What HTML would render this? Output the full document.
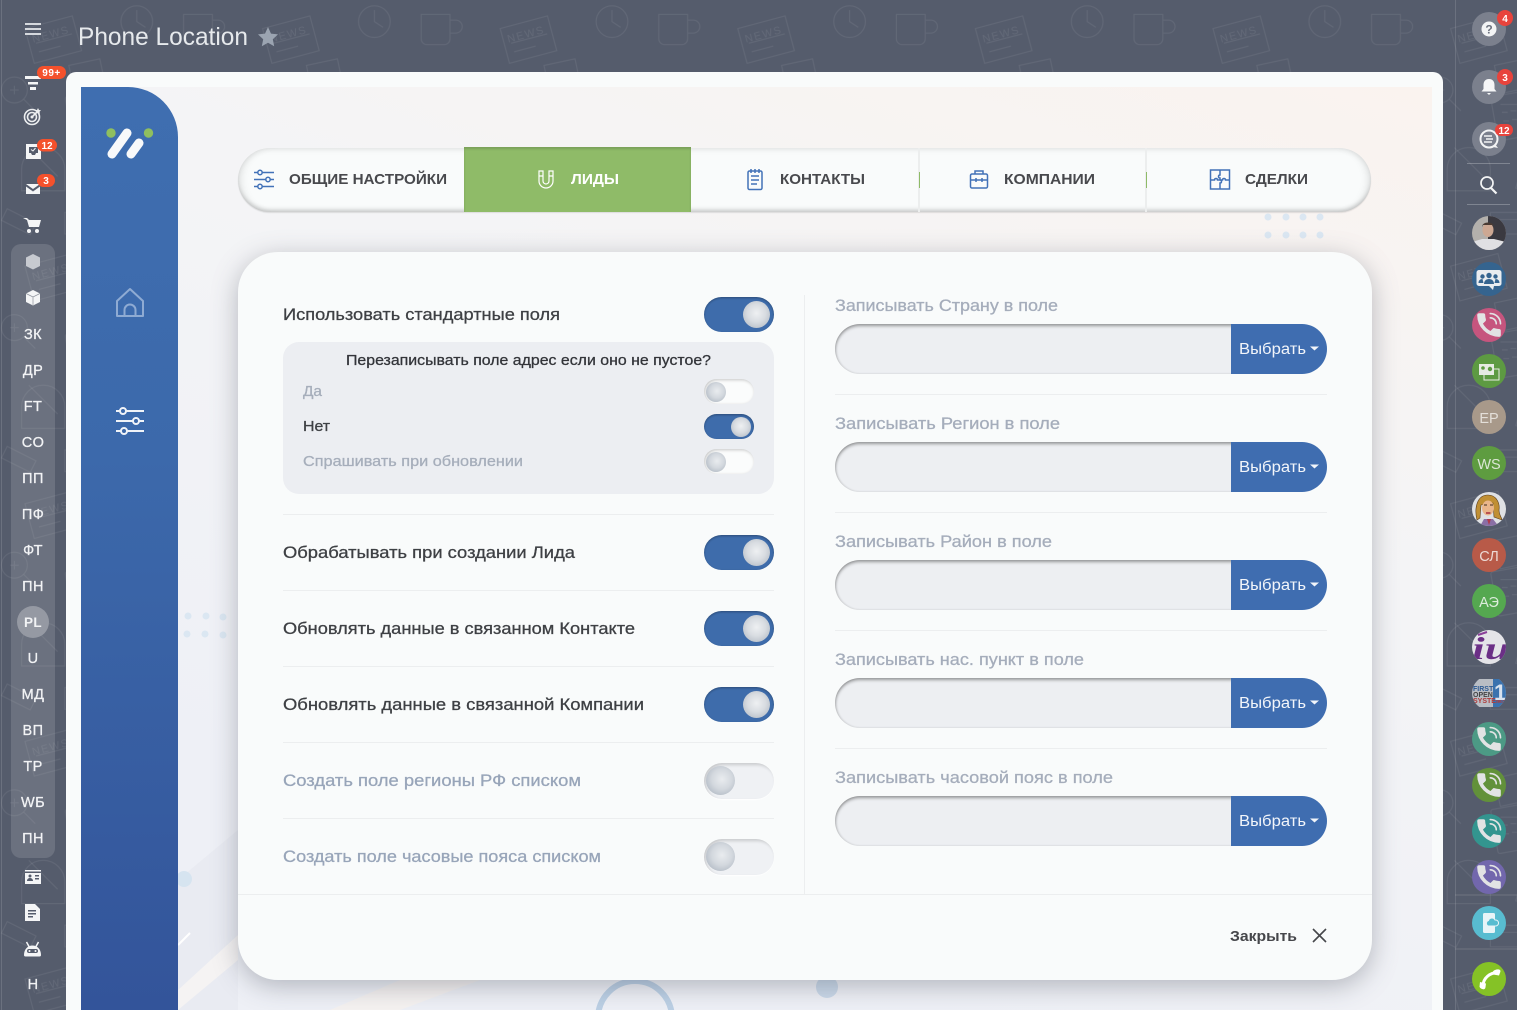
<!DOCTYPE html>
<html lang="ru"><head><meta charset="utf-8"><title>Phone Location</title>
<style>
html,body{margin:0;padding:0;width:1517px;height:1010px;overflow:hidden;background:#555c6c;font-family:"Liberation Sans","DejaVu Sans",sans-serif}
#root{position:relative;width:1517px;height:1010px;overflow:hidden}
.a{position:absolute}
svg{position:absolute;left:0;top:0}
.tog{position:absolute;width:70px;height:35px;border-radius:18px;background:#3e6cab;box-shadow:inset 0 1px 2px rgba(0,0,0,.3)}
.tog i{position:absolute;right:4px;top:4px;width:27px;height:27px;border-radius:50%;background:radial-gradient(circle at 50% 45%,#eef0f2 0,#d8dce1 45%,#a9b2bd 100%)}
.tog.s{width:50px;height:25px}
.tog.s i{width:20px;height:20px;top:2.500px;right:3px}
.tog.off{background:#eff1f4;box-shadow:inset 2px 2px 3px rgba(0,0,0,.16),0 1px 1px rgba(255,255,255,.8)}
.tog.off i{right:auto;left:2px;top:3px;width:29px;height:29px;background:radial-gradient(circle at 55% 45%,#e9ecef 0,#d3d8de 45%,#a2acb8 100%)}
.tog.s.off{background:#fbfcfc;box-shadow:inset 1px 1px 3px rgba(0,0,0,.22)}
.tog.s.off i{width:20px;height:20px;left:2px;top:2.500px}
.ln{position:absolute;height:1px;background:#eceeef}
.inp{position:absolute;left:835px;width:430px;height:50px;background:#edeff2;border-radius:25px 0 0 25px;box-shadow:inset 0 2px 3px rgba(0,0,0,.36),inset 1px 0 2px rgba(0,0,0,.1)}
.btn{position:absolute;left:1231px;width:96px;height:50px;background:#3f6db0;border-radius:0 25px 25px 0}
.w text{stroke-width:.28}
</style></head><body><div id="root">

<svg width="1517" height="1010" style="z-index:0">
<defs>
<pattern id="dd" width="330" height="330" patternUnits="userSpaceOnUse" patternTransform="scale(.72)">
<g fill="none" stroke="#fff" stroke-opacity=".07" stroke-width="1.600">
<rect x="40" y="30" width="68" height="50" transform="rotate(-15 74 55)"/>
<path d="M50 60l50-13M54 72l30-8"/>
<circle cx="190" cy="30" r="22"/><path d="M190 14v16l12 8"/>
<rect x="98" y="86" width="44" height="40" transform="rotate(-12 120 100)"/>
<path d="M255 20h40v34a8 8 0 0 1-8 8h-24a8 8 0 0 1-8-8zM295 28h8a7 7 0 0 1 0 18h-8"/>
<circle cx="20" cy="125" r="18"/><path d="M33 138l16 16M14 125h12M20 119v12"/>
<rect x="95" y="130" width="50" height="62" rx="3" transform="rotate(-10 120 160)"/>
<path d="M104 145h28M106 156h8M118 154h8M130 152h6M108 168h8M120 166h8"/>
<path d="M190 120l60-10 8 44-60 10zM198 130l44-7M200 142l44-7"/>
<circle cx="285" cy="140" r="24"/><path d="M273 152l24-24M290 123l8 8"/>
<path d="M30 235a30 30 0 1 1 60 0v30H30z"/><path d="M40 205l40 40"/>
<rect x="130" y="225" width="70" height="46" transform="rotate(15 165 248)"/>
<path d="M150 240h40M146 252h34"/>
<circle cx="245" cy="240" r="20"/><path d="M245 226v28M231 240h28"/>
<path d="M275 220h45v40h-20l-10 12v-12h-15z"/>
<path d="M10 290l40 20-8 16-40-20zM90 295h50v30H90zM100 305h30M180 295l30 18-20 14"/>
</g>
<text x="46" y="52" font-size="15" fill="#fff" fill-opacity=".08" letter-spacing="2" transform="rotate(-15 74 55)">NEWS</text>
</pattern>
<symbol id="ph" viewBox="0 0 24 24"><path fill="#e2e3e4" stroke="#e2e3e4" stroke-width=".9" stroke-linejoin="round" d="M6.600 10.800c1.400 2.800 3.800 5.100 6.600 6.600l2.200-2.200c.3-.3.7-.4 1-.2 1.100.4 2.300.6 3.600.6.600 0 1 .4 1 1V20c0 .6-.4 1-1 1C10.600 21 3 13.400 3 4c0-.6.4-1 1-1h3.500c.6 0 1 .4 1 1 0 1.300.2 2.500.6 3.600.1.300 0 .7-.2 1z"/><path fill="none" stroke="#e2e3e4" stroke-width="1.300" stroke-linecap="round" d="M13 2.800a8.200 8.200 0 0 1 8.200 8.200M13 6.200a4.800 4.800 0 0 1 4.800 4.800"/></symbol>
</defs>
<rect width="1517" height="1010" fill="#555c6c"/>
<rect width="1517" height="1010" fill="url(#dd)"/>
<path d="M1.500 0V1010M1455.500 0V1010" stroke="#fff" stroke-opacity=".13"/>
<path d="M1455 895H1517M1455 949H1517" stroke="#fff" stroke-opacity=".15"/>
</svg>

<div class="a" style="left:11px;top:244px;width:44px;height:614px;border-radius:10px;background:rgba(255,255,255,.13)"></div>
<div class="a" style="left:66px;top:72px;width:1377px;height:938px;background:#f9fbfb;border-radius:10px 10px 0 0"></div>
<div class="a" style="left:81px;top:87px;width:1351px;height:923px;background:linear-gradient(200deg,rgba(250,243,239,1) 0%,rgba(247,246,246,.6) 35%,rgba(238,240,246,1) 80%),#f0f2f6"></div>
<div class="a" style="left:81px;top:87px;width:97px;height:923px;border-radius:0 50px 0 0;background:linear-gradient(180deg,#3f6eb0 0%,#3c69ab 40%,#33549a 100%)"></div>

<svg width="1517" height="1010" style="z-index:0">
<clipPath id="cb"><rect x="178" y="87" width="1254" height="923"/></clipPath>
<g clip-path="url(#cb)">
<polygon points="178,880 238,830 238,1010 178,1010" fill="#e9ebf2"/>
<polygon points="178,990 238,935 238,960 178,1010" fill="#f5f3f3"/>
<path d="M178 945l12-12" stroke="#fff" stroke-width="2"/>
<polygon points="330,1010 400,980 480,980 400,1010" fill="#f5f2f1"/>
<g fill="#dbe7f2"><circle cx="1268" cy="217" r="3.500"/><circle cx="1286" cy="217" r="3.500"/><circle cx="1303" cy="217" r="3.500"/><circle cx="1320" cy="217" r="3.500"/><circle cx="1268" cy="235" r="3.500"/><circle cx="1286" cy="235" r="3.500"/><circle cx="1303" cy="235" r="3.500"/><circle cx="1320" cy="235" r="3.500"/>
<circle cx="188" cy="616" r="3.500"/><circle cx="206" cy="616" r="3.500"/><circle cx="223" cy="617" r="3.500"/><circle cx="187" cy="634" r="3.500"/><circle cx="205" cy="634" r="3.500"/><circle cx="223" cy="635" r="3.500"/></g>
<circle cx="184" cy="879" r="8" fill="#d6e4f0"/>
<circle cx="827" cy="987" r="11" fill="#cbdaea"/>
<circle cx="635" cy="1018" r="37" fill="none" stroke="#bcd0e5" stroke-width="6"/>
</g>
</svg>

<!-- tabs -->
<div class="a" style="left:238px;top:148px;width:1133px;height:64px;border-radius:32px;background:#f9fbfb;box-shadow:inset 0 5px 6px -3px rgba(0,0,0,.07),inset 7px 0 8px -4px rgba(0,0,0,.1),inset -7px 0 8px -4px rgba(0,0,0,.1),inset 0 -4px 5px -2px rgba(0,0,0,.2),0 1px 1px rgba(0,0,0,.1)"></div>
<div class="a" style="left:464px;top:147px;width:227px;height:65px;background:#8fbb68;box-shadow:inset 0 2px 2px rgba(0,0,0,.15)"></div>
<div class="a" style="left:918px;top:148px;width:2px;height:64px;background:#eceeee"></div>
<div class="a" style="left:1145px;top:148px;width:2px;height:64px;background:#eceeee"></div>
<div class="a" style="left:919px;top:172px;width:1px;height:16px;background:#8fbb68"></div>
<div class="a" style="left:1146px;top:172px;width:1px;height:16px;background:#8fbb68"></div>

<!-- card -->
<div class="a" style="left:238px;top:252px;width:1134px;height:728px;border-radius:40px;background:#f9fbfb;box-shadow:0 6px 26px rgba(60,65,80,.34)"></div>
<div class="a" style="left:283px;top:342px;width:491px;height:152px;border-radius:16px;background:#eceef2"></div>
<div class="ln" style="left:283px;top:514px;width:491px"></div>
<div class="ln" style="left:283px;top:590px;width:491px"></div>
<div class="ln" style="left:283px;top:666px;width:491px"></div>
<div class="ln" style="left:283px;top:742px;width:491px"></div>
<div class="ln" style="left:283px;top:818px;width:491px"></div>
<div class="a" style="left:804px;top:295px;width:1px;height:599px;background:#eceeef"></div>
<div class="ln" style="left:238px;top:894px;width:1134px"></div>
<div class="ln" style="left:835px;top:394px;width:492px"></div>
<div class="ln" style="left:835px;top:512px;width:492px"></div>
<div class="ln" style="left:835px;top:630px;width:492px"></div>
<div class="ln" style="left:835px;top:748px;width:492px"></div>

<div class="tog" style="left:704px;top:297px"><i></i></div>
<div class="tog s off" style="left:704px;top:379px"><i></i></div>
<div class="tog s" style="left:704px;top:414px"><i></i></div>
<div class="tog s off" style="left:704px;top:449px"><i></i></div>
<div class="tog" style="left:704px;top:535px"><i></i></div>
<div class="tog" style="left:704px;top:611px"><i></i></div>
<div class="tog" style="left:704px;top:687px"><i></i></div>
<div class="tog off" style="left:704px;top:763px;height:36px"><i></i></div>
<div class="tog off" style="left:704px;top:839px;height:36px"><i></i></div>

<div class="inp" style="top:324px"></div><div class="btn" style="top:324px"></div>
<div class="inp" style="top:442px"></div><div class="btn" style="top:442px"></div>
<div class="inp" style="top:560px"></div><div class="btn" style="top:560px"></div>
<div class="inp" style="top:678px"></div><div class="btn" style="top:678px"></div>
<div class="inp" style="top:796px"></div><div class="btn" style="top:796px"></div>

<svg width="1517" height="1010" style="z-index:2" font-family="'Liberation Sans','DejaVu Sans',sans-serif">
<!-- header -->
<g stroke="#d5d8dd" stroke-width="2"><path d="M25 24h16M25 29h16M25 34h16"/></g>
<text x="78" y="45" font-size="25" fill="#e6e9ec" textLength="170" lengthAdjust="spacingAndGlyphs">Phone Location</text>
<path d="M268 27l3 6.600 7 .8-5.200 4.800 1.400 7-6.200-3.500-6.200 3.500 1.400-7-5.200-4.800 7-.8z" fill="#9ba4b1"/>

<!-- left icons -->
<g fill="#f4f5f6">
<path d="M25 76h16v3H25zM28 82h10v2.500H28zM30 87h6v3h-6z"/>
<path d="M26 144h15v15H26z"/><path d="M29 147h9v6h-2l-1 2h-3l-1-2h-2z" fill="#555c6c"/><path d="M31 149.500l2 1.500 2.500-3" stroke="#f4f5f6" fill="none"/>
<path d="M26 184h14l-7 5zM26 186.500l7 5 7-5v7.500H26z"/>
<path d="M23 218h4l2 2h12l-2 7H29l-2-7zM29 229a2 2 0 1 1 0 4 2 2 0 0 1 0-4zM37 229a2 2 0 1 1 0 4 2 2 0 0 1 0-4z"/>
<path d="M33 254l7 3.500v8.500l-7 3.500-7-3.500v-8.500z" fill="#c7cad0"/>
<path d="M33 290l7 3.500v8.500l-7 3.500-7-3.500v-8.500z"/><path d="M26 293.500l7 3.500 7-3.500M33 297v8" fill="none" stroke="#8d929c" stroke-width=".7"/>
<path d="M25 870h16v1.500H25z"/><path d="M25 873h16v11H25z"/>
<path d="M27 881c0-2 1.500-3 3-3s3 1 3 3zM35 875h4v1.500h-4zM35 878h4v1.500h-4z" fill="#555c6c"/><circle cx="30" cy="876" r="1.500" fill="#555c6c"/>
<path d="M25 904h10l5 5v12H25z"/><path d="M28 910h8v1.500h-8zM28 913h8v1.500h-8zM28 916h5v1.500h-5z" fill="#555c6c"/>
<path d="M24 955c0-6 4-9.500 8.500-9.500s8.500 3.500 8.500 9.500c0 1-.5 1.500-1.500 1.500h-14c-1 0-1.500-.5-1.500-1.500z"/><path d="M26.500 942l2.500 4.500M38.500 942l-2.500 4.500" stroke="#f4f5f6" stroke-width="1.500"/>
<rect x="27" y="949" width="11" height="4" rx="2" fill="#555c6c"/><circle cx="29.500" cy="951" r="1" fill="#f4f5f6"/><circle cx="35.500" cy="951" r="1" fill="#f4f5f6"/>
</g>
<g fill="none" stroke="#eceef0" stroke-width="1.600"><circle cx="32" cy="117" r="7.500"/><circle cx="32" cy="117" r="4.500"/><path d="M32 117l7-7"/></g>
<circle cx="32" cy="117" r="1.500" fill="#eceef0"/>
<path d="M38 108l1 2 2 .3-1.500 1.400.4 2-1.900-1-1.900 1 .4-2-1.500-1.400 2-.3z" fill="#eceef0"/>

<!-- badges -->
<rect x="37" y="66" width="29" height="13" rx="6.500" fill="#f4512c"/><text x="51.500" y="76" font-size="10" font-weight="bold" fill="#fff" text-anchor="middle" letter-spacing=".5">99+</text>
<rect x="37" y="139" width="20" height="12.500" rx="6.200" fill="#f4512c"/><text x="47" y="149" font-size="10" font-weight="bold" fill="#fff" text-anchor="middle">12</text>
<rect x="37" y="174" width="18" height="13" rx="6.500" fill="#f4512c"/><text x="46" y="184" font-size="10" font-weight="bold" fill="#fff" text-anchor="middle">3</text>

<!-- left labels -->
<circle cx="33" cy="622" r="16" fill="#9599a3"/>
<g class="w" font-size="14.500" fill="#f2f3f5" stroke="#f2f3f5" text-anchor="middle" letter-spacing=".4">
<text x="33" y="339">ЗК</text><text x="33" y="375">ДР</text><text x="33" y="411">FT</text><text x="33" y="447">CO</text><text x="33" y="483">ПП</text><text x="33" y="519">ПФ</text><text x="33" y="555">ФТ</text><text x="33" y="591">ПН</text><text x="33" y="627" font-weight="bold" font-size="13.500" stroke="none">PL</text><text x="33" y="663">U</text><text x="33" y="699">МД</text><text x="33" y="735">ВП</text><text x="33" y="771">ТР</text><text x="33" y="807">WБ</text><text x="33" y="843">ПН</text><text x="33" y="989">Н</text>
</g>

<!-- sidebar logo + icons -->
<circle cx="111" cy="133" r="4.700" fill="#8fbf5f"/><circle cx="148.500" cy="133" r="4.700" fill="#8fbf5f"/>
<path d="M112 154l15-21M131 154l8-11" stroke="#f8f9fa" stroke-width="9" stroke-linecap="round" fill="none"/>
<g fill="none" stroke="#8fabd3" stroke-width="2"><path d="M117 316v-15l13-12 13 12v15z" stroke-linejoin="round"/><path d="M124.500 316v-6a5.500 5.500 0 0 1 11 0v6"/></g>
<g fill="none" stroke="#f0f3f8" stroke-width="2"><path d="M116 411h28M116 421h28M116 431h28"/><circle cx="123" cy="411" r="3" fill="#3d6aab"/><circle cx="136" cy="421" r="3" fill="#3c68a9"/><circle cx="124" cy="431" r="3" fill="#3c68a9"/></g>

<!-- tab icons -->
<g fill="none" stroke="#4272b8" stroke-width="1.500">
<path d="M254 172.500h20M254 179.500h20M254 186.500h20"/><circle cx="260" cy="172.500" r="2.200" fill="#f9fbfb"/><circle cx="268" cy="179.500" r="2.200" fill="#f9fbfb"/><circle cx="260" cy="186.500" r="2.200" fill="#f9fbfb"/>
<rect x="748" y="171" width="14" height="18.500" rx="1.500"/><path d="M751 169v4M755 169v4M759 169v4M751 176h8M751 180h8M751 184h6"/>
<rect x="970.500" y="174" width="17" height="14" rx="1.500"/><path d="M975 174v-3h8v3M970.500 180h17M976 178v4M982 178v4"/>
<rect x="1210.500" y="170" width="19" height="19"/><path d="M1220 170v5c-2 0-2 3 0 3v2c2 0 2 3 0 3v6M1210.500 180h4c0-2 3-2 3 0h5c0-2 3-2 3 0h4"/>
</g>
<path d="M539 171v10a7 7 0 0 0 14 0v-10h-4v10a3 3 0 0 1-6 0v-10z" fill="none" stroke="#fff" stroke-width="1.200"/><path d="M539 176h4M549 176h4" stroke="#fff" stroke-width="1.200"/>

<!-- tab text -->
<g font-size="15" font-weight="bold" fill="#48494d">
<text x="289" y="184" textLength="158" lengthAdjust="spacingAndGlyphs">ОБЩИЕ НАСТРОЙКИ</text>
<text x="571" y="184" fill="#fff" textLength="48" lengthAdjust="spacingAndGlyphs">ЛИДЫ</text>
<text x="780" y="184" textLength="85" lengthAdjust="spacingAndGlyphs">КОНТАКТЫ</text>
<text x="1004" y="184" textLength="91" lengthAdjust="spacingAndGlyphs">КОМПАНИИ</text>
<text x="1245" y="184" textLength="63" lengthAdjust="spacingAndGlyphs">СДЕЛКИ</text>
</g>

<!-- left labels -->
<g class="w" font-size="16.500" fill="#3e4044" stroke="#3e4044">
<text x="283" y="320" textLength="277" lengthAdjust="spacingAndGlyphs">Использовать стандартные поля</text>
<text x="283" y="558" textLength="292" lengthAdjust="spacingAndGlyphs">Обрабатывать при создании Лида</text>
<text x="283" y="634" textLength="352" lengthAdjust="spacingAndGlyphs">Обновлять данные в связанном Контакте</text>
<text x="283" y="710" textLength="361" lengthAdjust="spacingAndGlyphs">Обновлять данные в связанной Компании</text>
<text x="283" y="786" fill="#98a5b9" stroke="#98a5b9" textLength="298" lengthAdjust="spacingAndGlyphs">Создать поле регионы РФ списком</text>
<text x="283" y="862" fill="#98a5b9" stroke="#98a5b9" textLength="318" lengthAdjust="spacingAndGlyphs">Создать поле часовые пояса списком</text>
</g>
<g class="w" font-size="14.500">
<text x="346" y="365" fill="#33353a" stroke="#33353a" textLength="365" lengthAdjust="spacingAndGlyphs">Перезаписывать поле адрес если оно не пустое?</text>
<text x="303" y="396" fill="#a6aebb" stroke="#a6aebb" textLength="19" lengthAdjust="spacingAndGlyphs">Да</text>
<text x="303" y="431" fill="#3e4044" stroke="#3e4044" textLength="27" lengthAdjust="spacingAndGlyphs">Нет</text>
<text x="303" y="466" fill="#a6aebb" stroke="#a6aebb" textLength="220" lengthAdjust="spacingAndGlyphs">Спрашивать при обновлении</text>
</g>

<!-- right labels -->
<g class="w" font-size="16.500" fill="#a5adbb" stroke="#a5adbb">
<text x="835" y="311" textLength="223" lengthAdjust="spacingAndGlyphs">Записывать Страну в поле</text>
<text x="835" y="429" textLength="225" lengthAdjust="spacingAndGlyphs">Записывать Регион в поле</text>
<text x="835" y="547" textLength="217" lengthAdjust="spacingAndGlyphs">Записывать Район в поле</text>
<text x="835" y="665" textLength="249" lengthAdjust="spacingAndGlyphs">Записывать нас. пункт в поле</text>
<text x="835" y="783" textLength="278" lengthAdjust="spacingAndGlyphs">Записывать часовой пояс в поле</text>
</g>
<g font-size="15.500" fill="#f2f5fa">
<text x="1239" y="354" textLength="67" lengthAdjust="spacingAndGlyphs">Выбрать</text>
<text x="1239" y="472" textLength="67" lengthAdjust="spacingAndGlyphs">Выбрать</text>
<text x="1239" y="590" textLength="67" lengthAdjust="spacingAndGlyphs">Выбрать</text>
<text x="1239" y="708" textLength="67" lengthAdjust="spacingAndGlyphs">Выбрать</text>
<text x="1239" y="826" textLength="67" lengthAdjust="spacingAndGlyphs">Выбрать</text>
<path d="M1310 346.500h9l-4.500 4zM1310 464.500h9l-4.500 4zM1310 582.500h9l-4.500 4zM1310 700.500h9l-4.500 4zM1310 818.500h9l-4.500 4z"/>
</g>
<text x="1230" y="941" font-size="15" font-weight="bold" fill="#46474b" textLength="67" lengthAdjust="spacingAndGlyphs">Закрыть</text>
<path d="M1313 929l13 13M1326 929l-13 13" stroke="#46474b" stroke-width="1.600" fill="none"/>

<!-- right rail -->
<g fill="#7b808d"><circle cx="1489" cy="29" r="17"/><circle cx="1489" cy="87" r="17"/><circle cx="1489" cy="139" r="17"/></g>
<circle cx="1489" cy="29" r="7.500" fill="#f3f4f5"/><text x="1489" y="33.500" font-size="12" font-weight="bold" fill="#6b717e" text-anchor="middle">?</text>
<path d="M1489 79c-4 0-5.500 3-5.500 6v4l-2 2.500h15l-2-2.500v-4c0-3-1.500-6-5.500-6zM1487 93h4l-2 2z" fill="#f5f6f7"/>
<circle cx="1489" cy="139" r="8.500" fill="none" stroke="#f3f4f5" stroke-width="2"/><path d="M1484 136h8M1486 139h7M1484 142h8" stroke="#f3f4f5" stroke-width="1.500"/><path d="M1495 144l3 4-5-1z" fill="#f3f4f5"/>
<circle cx="1505" cy="18" r="8" fill="#e8433c"/><text x="1505" y="22" font-size="10" font-weight="bold" fill="#fff" text-anchor="middle">4</text>
<circle cx="1505" cy="77" r="8" fill="#e8433c"/><text x="1505" y="81" font-size="10" font-weight="bold" fill="#fff" text-anchor="middle">3</text>
<rect x="1495" y="124" width="18" height="12" rx="6" fill="#e8433c"/><text x="1504" y="134" font-size="10" font-weight="bold" fill="#fff" text-anchor="middle">12</text>
<path d="M1467 163.500h43M1467 204.500h43" stroke="#fff" stroke-opacity=".25"/>
<circle cx="1487" cy="183" r="6" fill="none" stroke="#f3f4f5" stroke-width="1.700"/><path d="M1491 188l5.500 5.500" stroke="#f3f4f5" stroke-width="2.200"/>

<!-- avatars -->
<clipPath id="c1"><circle cx="1489" cy="233" r="17"/></clipPath>
<g clip-path="url(#c1)"><rect x="1472" y="216" width="34" height="34" fill="#b3b0ac"/><rect x="1488" y="216" width="18" height="26" fill="#3a3940"/><ellipse cx="1488" cy="230" rx="5.500" ry="7" fill="#cda893"/><path d="M1482 227c0-6 12-6 12 0l-1-2h-10z" fill="#4a3b33"/><path d="M1472 250v-8l10-3h12l12 3v8z" fill="#e0e0e3"/></g>
<circle cx="1489" cy="279" r="17" fill="#35648f"/>
<path d="M1479 270h20a2.500 2.500 0 0 1 2.500 2.500v11a2.500 2.500 0 0 1-2.500 2.500h-5l-1 4-4-4h-10a2.500 2.500 0 0 1-2.500-2.500v-11a2.500 2.500 0 0 1 2.500-2.500z" fill="#e9ecef"/>
<g fill="#35648f"><circle cx="1489" cy="275.500" r="2.700"/><path d="M1484 284c0-3 2-5 5-5s5 2 5 5z"/><circle cx="1482.500" cy="276.500" r="2.200"/><circle cx="1495.500" cy="276.500" r="2.200"/><path d="M1478.500 283c0-2.500 1.500-4 4-4l1 4zM1499.500 283c0-2.500-1.500-4-4-4l-1 4z"/></g>
<circle cx="1489" cy="325" r="17" fill="#c6557e"/><use href="#ph" x="1474" y="310" width="30" height="30"/>
<circle cx="1489" cy="371" r="17" fill="#5d9a42"/>
<rect x="1479" y="364" width="15" height="11" fill="#e6ebe3"/><rect x="1484" y="369" width="15" height="11" fill="none" stroke="#e6ebe3" stroke-width="1"/><circle cx="1483" cy="368" r="1.800" fill="#5d9a42"/><circle cx="1490" cy="369" r="2.200" fill="#5d9a42"/>
<circle cx="1489" cy="417" r="17" fill="#a8998a"/><text x="1489" y="423" font-size="14.500" fill="#e4dfd9" text-anchor="middle">EP</text>
<circle cx="1489" cy="463" r="17" fill="#5e9c40"/><text x="1489" y="469" font-size="14.500" fill="#dbe6d5" text-anchor="middle">WS</text>
<clipPath id="c2"><circle cx="1489" cy="509" r="17"/></clipPath>
<g clip-path="url(#c2)"><rect x="1472" y="492" width="34" height="34" fill="#dfe1e4"/><path d="M1477 520c-3-12 0-25 11-25 9 0 12 9 11 15 0 5 3 8 3 10l-8-3-1-14-12 2-1 13z" fill="#c08f34" stroke="#5b3e1d" stroke-width=".6"/><ellipse cx="1488" cy="508" rx="6" ry="7.500" fill="#e9b58a"/><path d="M1479 528l5-9h9l7 9z" fill="#8a6fa5"/><path d="M1486 513h4.500" stroke="#a83240" stroke-width="1.500"/><path d="M1484 505h3M1490 505h3" stroke="#3b2a1d"/><path d="M1487 519l2 6 2-6z" fill="#b23a4a"/></g>
<circle cx="1489" cy="555" r="17" fill="#b85a48"/><text x="1489" y="561" font-size="14.500" fill="#ecd9d4" text-anchor="middle">СЛ</text>
<circle cx="1489" cy="601" r="17" fill="#55a850"/><text x="1489" y="607" font-size="14.500" fill="#dcecdb" text-anchor="middle">АЭ</text>
<clipPath id="c3"><circle cx="1489" cy="647" r="17"/></clipPath>
<g clip-path="url(#c3)"><rect x="1472" y="630" width="34" height="34" fill="#e4e4e8"/><text x="1472" y="659" font-family="'Liberation Serif',serif" font-style="italic" font-weight="bold" font-size="32" fill="#6b2f86" textLength="38" lengthAdjust="spacingAndGlyphs">iu</text><path d="M1478 635l9-3" stroke="#8a3f9a" stroke-width="2"/></g>
<clipPath id="c4"><path d="M1472 679h34v28h-34z"/></clipPath>
<clipPath id="c4b"><circle cx="1489" cy="693" r="17"/></clipPath>
<g clip-path="url(#c4)"><g clip-path="url(#c4b)"><rect x="1472" y="676" width="34" height="34" fill="#b9bdc4"/><path d="M1493 676h13v34h-13z" fill="#3a72ae"/><text x="1473" y="691" font-size="7" font-weight="bold" fill="#2c5a94">FIRST</text><text x="1473" y="697" font-size="7" font-weight="bold" fill="#444">OPEN</text><text x="1473" y="703" font-size="7" font-weight="bold" fill="#b03b3b">SYSTEMS</text><text x="1494" y="700" font-size="22" font-weight="bold" fill="#d8e2ee">1</text></g></g>
<circle cx="1489" cy="739" r="17" fill="#4c9a85"/><use href="#ph" x="1474" y="724" width="30" height="30"/>
<circle cx="1489" cy="785" r="17" fill="#62913a"/><use href="#ph" x="1474" y="770" width="30" height="30"/>
<circle cx="1489" cy="831" r="17" fill="#33958f"/><use href="#ph" x="1474" y="816" width="30" height="30"/>
<circle cx="1489" cy="877" r="17" fill="#7267ad"/><use href="#ph" x="1474" y="862" width="30" height="30"/>
<circle cx="1489" cy="923" r="17" fill="#58bcd0"/>
<rect x="1483" y="913" width="12" height="20" rx="1.500" fill="#e8f4f7"/><path d="M1488 926a3 3 0 0 1 .5-5.500 3.500 3.500 0 0 1 6.500-.5 3 3 0 0 1 1 6z" fill="#58bcd0" stroke="#e8f4f7"/>
<circle cx="1489" cy="979" r="17" fill="#85c226"/>
<path d="M1483 986c0-8 7-13.500 15-13.500" fill="none" stroke="#fff" stroke-width="3"/><path d="M1480 982l6 1.500-.5 3.800c-.2 1.400-1 2.200-2.300 2-1.500-.2-3.200-1.100-3.700-2.500zM1493 971.500c1-1.500 4-2.500 6-2 1.300.3 1.700 1.300 1.300 2.500l-1.300 3.500-6-1z" fill="#fff"/>
</svg>
</div></body></html>
